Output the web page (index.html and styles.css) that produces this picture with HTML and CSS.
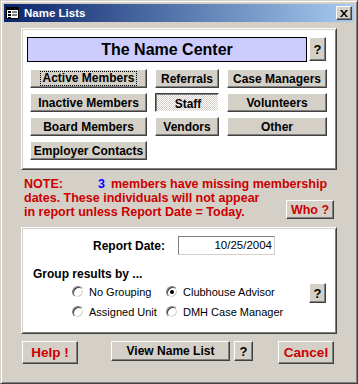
FILE: index.html
```html
<!doctype html>
<html lang="en">
<head>
    <meta charset="UTF-8">
    <title>Name Lists</title>
    <link rel="stylesheet" href="styles.css">
</head>
<body>
<div class="window">
    <div class="titlebar">
        <svg class="app-icon" width="13" height="12" viewBox="0 0 13 12">
            <rect x="0.5" y="0.5" width="12" height="11" fill="#fff" stroke="#000"/>
            <rect x="1" y="1" width="11" height="2" fill="#000"/>
            <rect x="2" y="4" width="3" height="2" fill="#000"/>
            <rect x="6" y="4" width="5" height="2" fill="#808080"/>
            <rect x="2" y="7" width="3" height="2" fill="#000"/>
            <rect x="6" y="7" width="5" height="2" fill="#808080"/>
            <rect x="2" y="10" width="3" height="1" fill="#000"/>
        </svg>
        <span class="title">Name Lists</span>
        <div class="close-btn">
            <svg width="8" height="7" viewBox="0 0 8 7">
                <path d="M0 0h2l2 2.5L6 0h2L5 3.5 8 7H6L4 4.5 2 7H0l3-3.5z" fill="#000"/>
            </svg>
        </div>
    </div>

    <div class="client">
        <!-- lists panel -->
        <div class="panel lists">
            <div class="head-row">
                <div class="center-title">The Name Center</div>
                <div class="btn q-btn">?</div>
            </div>
            <div class="list-grid">
                <div class="btn"><span class="focus">Active Members</span></div>
                <div class="btn">Referrals</div>
                <div class="btn">Case Managers</div>
                <div class="btn">Inactive Members</div>
                <div class="btn pressed">Staff</div>
                <div class="btn">Volunteers</div>
                <div class="btn">Board Members</div>
                <div class="btn">Vendors</div>
                <div class="btn">Other</div>
                <div class="btn">Employer Contacts</div>
            </div>
        </div>

        <div class="note-row">
            <p class="note"><span class="note-label">NOTE:</span><span class="count">3</span>members have missing membership<br>dates. These individuals will not appear<br>in report unless Report Date = Today.</p>
            <div class="btn red who-btn">Who ?</div>
        </div>

        <!-- report options -->
        <div class="panel options">
            <div class="date-row">
                <span class="date-label">Report Date:</span>
                <div class="date-box">10/25/2004</div>
            </div>
            <div class="group-label">Group results by ...</div>
            <div class="group-row">
                <div class="radios">
                    <label class="radio-item"><span class="radio"></span>No Grouping</label>
                    <label class="radio-item"><span class="radio checked"></span>Clubhouse Advisor</label>
                    <label class="radio-item"><span class="radio"></span>Assigned Unit</label>
                    <label class="radio-item"><span class="radio"></span>DMH Case Manager</label>
                </div>
                <div class="btn q-btn group-q">?</div>
            </div>
        </div>

        <div class="action-row">
            <div class="btn red big help-btn">Help !</div>
            <div class="btn view-btn">View Name List</div>
            <div class="btn view-q">?</div>
            <div class="btn red big cancel-btn">Cancel</div>
        </div>
    </div>
</div>
</body>
</html>
```

FILE: styles.css
```css
body{
    margin: 0;
    font-family: "Liberation Sans", Arial, sans-serif;
}
.window{
    width: 358px;
    height: 384px;
    box-sizing: border-box;
    background-color: #d4d0c8;
    border: 1px solid;
    border-color: #d4d0c8 #404040 #404040 #d4d0c8;
    box-shadow: inset 1px 1px #fff, inset -1px -1px #808080;
    padding: 3px;
    display: flex;
    flex-direction: column;
}

/* title bar */
.titlebar{
    height: 18px;
    display: flex;
    align-items: center;
    background: linear-gradient(to right, #0a246a, #a6caf0);
    color: #fff;
    padding: 0 2px 0 2px;
}
.app-icon{
    margin-right: 5px;
}
.title{
    font-weight: bold;
    font-size: 11.5px;
    flex: 1;
}
.close-btn{
    width: 16px;
    height: 14px;
    box-sizing: border-box;
    background: #d4d0c8;
    border: 1px solid;
    border-color: #fff #404040 #404040 #fff;
    box-shadow: inset -1px -1px #808080;
    display: flex;
    align-items: center;
    justify-content: center;
}

.client{
    padding: 6px 17px 0 17px;
    display: flex;
    flex-direction: column;
}

/* raised 3d panels */
.panel{
    background: #fff;
    border: 1px solid;
    border-color: #fff #404040 #404040 #fff;
    box-shadow: inset 1px 1px #d4d0c8, inset -1px -1px #808080;
}
.lists{
    height: 142px;
    box-sizing: border-box;
    padding: 8px 0 0 5px;
}
.head-row{
    display: flex;
    gap: 2px;
}
.center-title{
    width: 278px;
    height: 23px;
    border: 1px solid #000;
    background: #ccccff;
    font-size: 16px;
    font-weight: bold;
    text-align: center;
    line-height: 23px;
}

/* classic buttons */
.btn{
    background: #d4d0c8;
    border: 1px solid;
    border-color: #fff #404040 #404040 #fff;
    box-shadow: inset -1px -1px #808080;
    font-size: 12px;
    font-weight: bold;
    display: flex;
    align-items: center;
    justify-content: center;
    box-sizing: border-box;
    color: #000;
}
.q-btn{
    width: 17px;
    height: 24px;
    font-size: 13px;
}
.list-grid{
    margin: 7px 0 0 3px;
    display: grid;
    grid-template-columns: 117px 64px 100px;
    grid-auto-rows: 19px;
    column-gap: 8px;
    row-gap: 5px;
}
.focus{
    outline: 1px dotted #000;
    padding: 0 1px;
    line-height: 13px;
}
.pressed{
    border-color: #404040 #fff #fff #404040;
    box-shadow: inset 1px 1px #808080;
    background-color: #fff;
    background-image: repeating-conic-gradient(#d4d0c8 0 25%, #fff 0 50%);
    background-size: 2px 2px;
    padding: 2px 0 0 2px;
}

/* note: text and Who button share one grid cell */
.note-row{
    margin-top: 7px;
    display: grid;
    padding: 0 3px 0 3px;
}
.note{
    grid-area: 1 / 1;
    margin: 0;
    white-space: nowrap;
    color: #cc0000;
    font-size: 12.5px;
    font-weight: bold;
    line-height: 14px;
}
.note-label{
    display: inline-block;
    width: 73px;
}
.count{
    display: inline-block;
    width: 8px;
    color: #0000ff;
    text-align: right;
    margin-right: 6px;
}
.red{
    color: #cc0000;
}
.who-btn{
    grid-area: 1 / 1;
    justify-self: end;
    align-self: end;
    width: 48px;
    height: 19px;
    font-size: 12.5px;
}

/* options panel */
.options{
    margin-top: 8px;
    height: 107px;
    box-sizing: border-box;
    padding: 8px 0 0 0;
}
.date-row{
    display: flex;
    align-items: center;
    padding-left: 71px;
}
.date-label{
    font-size: 12px;
    font-weight: bold;
    width: 85px;
}
.date-box{
    width: 97px;
    height: 19px;
    box-sizing: border-box;
    border: 1px solid;
    border-color: #808080 #d4d0c8 #d4d0c8 #808080;
    font-size: 11.5px;
    text-align: right;
    line-height: 17px;
    padding-right: 2px;
}
.group-label{
    margin: 12px 0 0 11px;
    font-size: 12px;
    font-weight: bold;
    line-height: 14px;
}
.group-row{
    display: flex;
    justify-content: space-between;
    padding: 1px 10px 0 50px;
}
.radios{
    display: grid;
    grid-template-columns: 94px 120px;
    grid-auto-rows: 20px;
}
.radio-item{
    display: flex;
    align-items: center;
    gap: 5px;
    font-size: 11px;
}
.radio{
    width: 12px;
    height: 12px;
    box-sizing: border-box;
    border-radius: 50%;
    border: 1px solid;
    border-color: #808080 #fff #fff #808080;
    box-shadow: inset 1px 1px #404040, inset -1px -1px #d4d0c8;
    background: #fff;
    position: relative;
}
.checked::after{
    content: "";
    position: absolute;
    left: 3px;
    top: 3px;
    width: 4px;
    height: 4px;
    border-radius: 50%;
    background: #000;
}
.group-q{
    height: 20px;
    margin-top: 1px;
}

/* bottom buttons */
.action-row{
    margin-top: 7px;
    display: flex;
    align-items: flex-start;
    padding-left: 1px;
}
.big{
    font-size: 13.5px;
    height: 23px;
    width: 56px;
}
.view-btn{
    margin-left: 33px;
    width: 119px;
    height: 20px;
}
.view-q{
    margin-left: 4px;
    width: 19px;
    height: 20px;
    font-size: 13px;
}
.cancel-btn{
    margin-left: 25px;
}
```
